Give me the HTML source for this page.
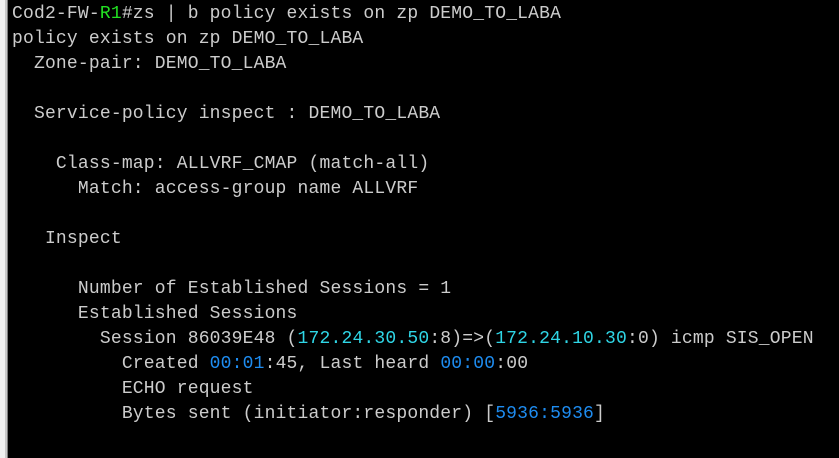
<!DOCTYPE html>
<html><head><style>
html,body{margin:0;padding:0;width:839px;height:458px;overflow:hidden;background:#000}
.l{position:absolute;left:0;top:0;width:5px;height:458px;background:#f0f0f0}
.l2{position:absolute;left:5px;top:0;width:2px;height:458px;background:#c8c8c8}
.l3{position:absolute;left:7px;top:0;width:1px;height:458px;background:#7a7a7a}
pre{position:absolute;left:12px;top:2px;margin:0;font-family:"Liberation Mono",monospace;font-size:18px;line-height:25px;color:#cccccc;letter-spacing:0.18px}
.g{color:#22e022}.c{color:#2fd6e6}.b{color:#1e8cf0}
</style></head><body>
<div class="l"></div><div class="l2"></div><div class="l3"></div>
<pre>Cod2-FW-<span class="g">R1</span>#zs | b policy exists on zp DEMO_TO_LABA
policy exists on zp DEMO_TO_LABA
  Zone-pair: DEMO_TO_LABA

  Service-policy inspect : DEMO_TO_LABA

    Class-map: ALLVRF_CMAP (match-all)
      Match: access-group name ALLVRF

   Inspect

      Number of Established Sessions = 1
      Established Sessions
        Session 86039E48 (<span class="c">172.24.30.50</span>:8)=>(<span class="c">172.24.10.30</span>:0) icmp SIS_OPEN
          Created <span class="b">00:01</span>:45, Last heard <span class="b">00:00</span>:00
          ECHO request
          Bytes sent (initiator:responder) [<span class="b">5936:5936</span>]
</pre>
</body></html>
